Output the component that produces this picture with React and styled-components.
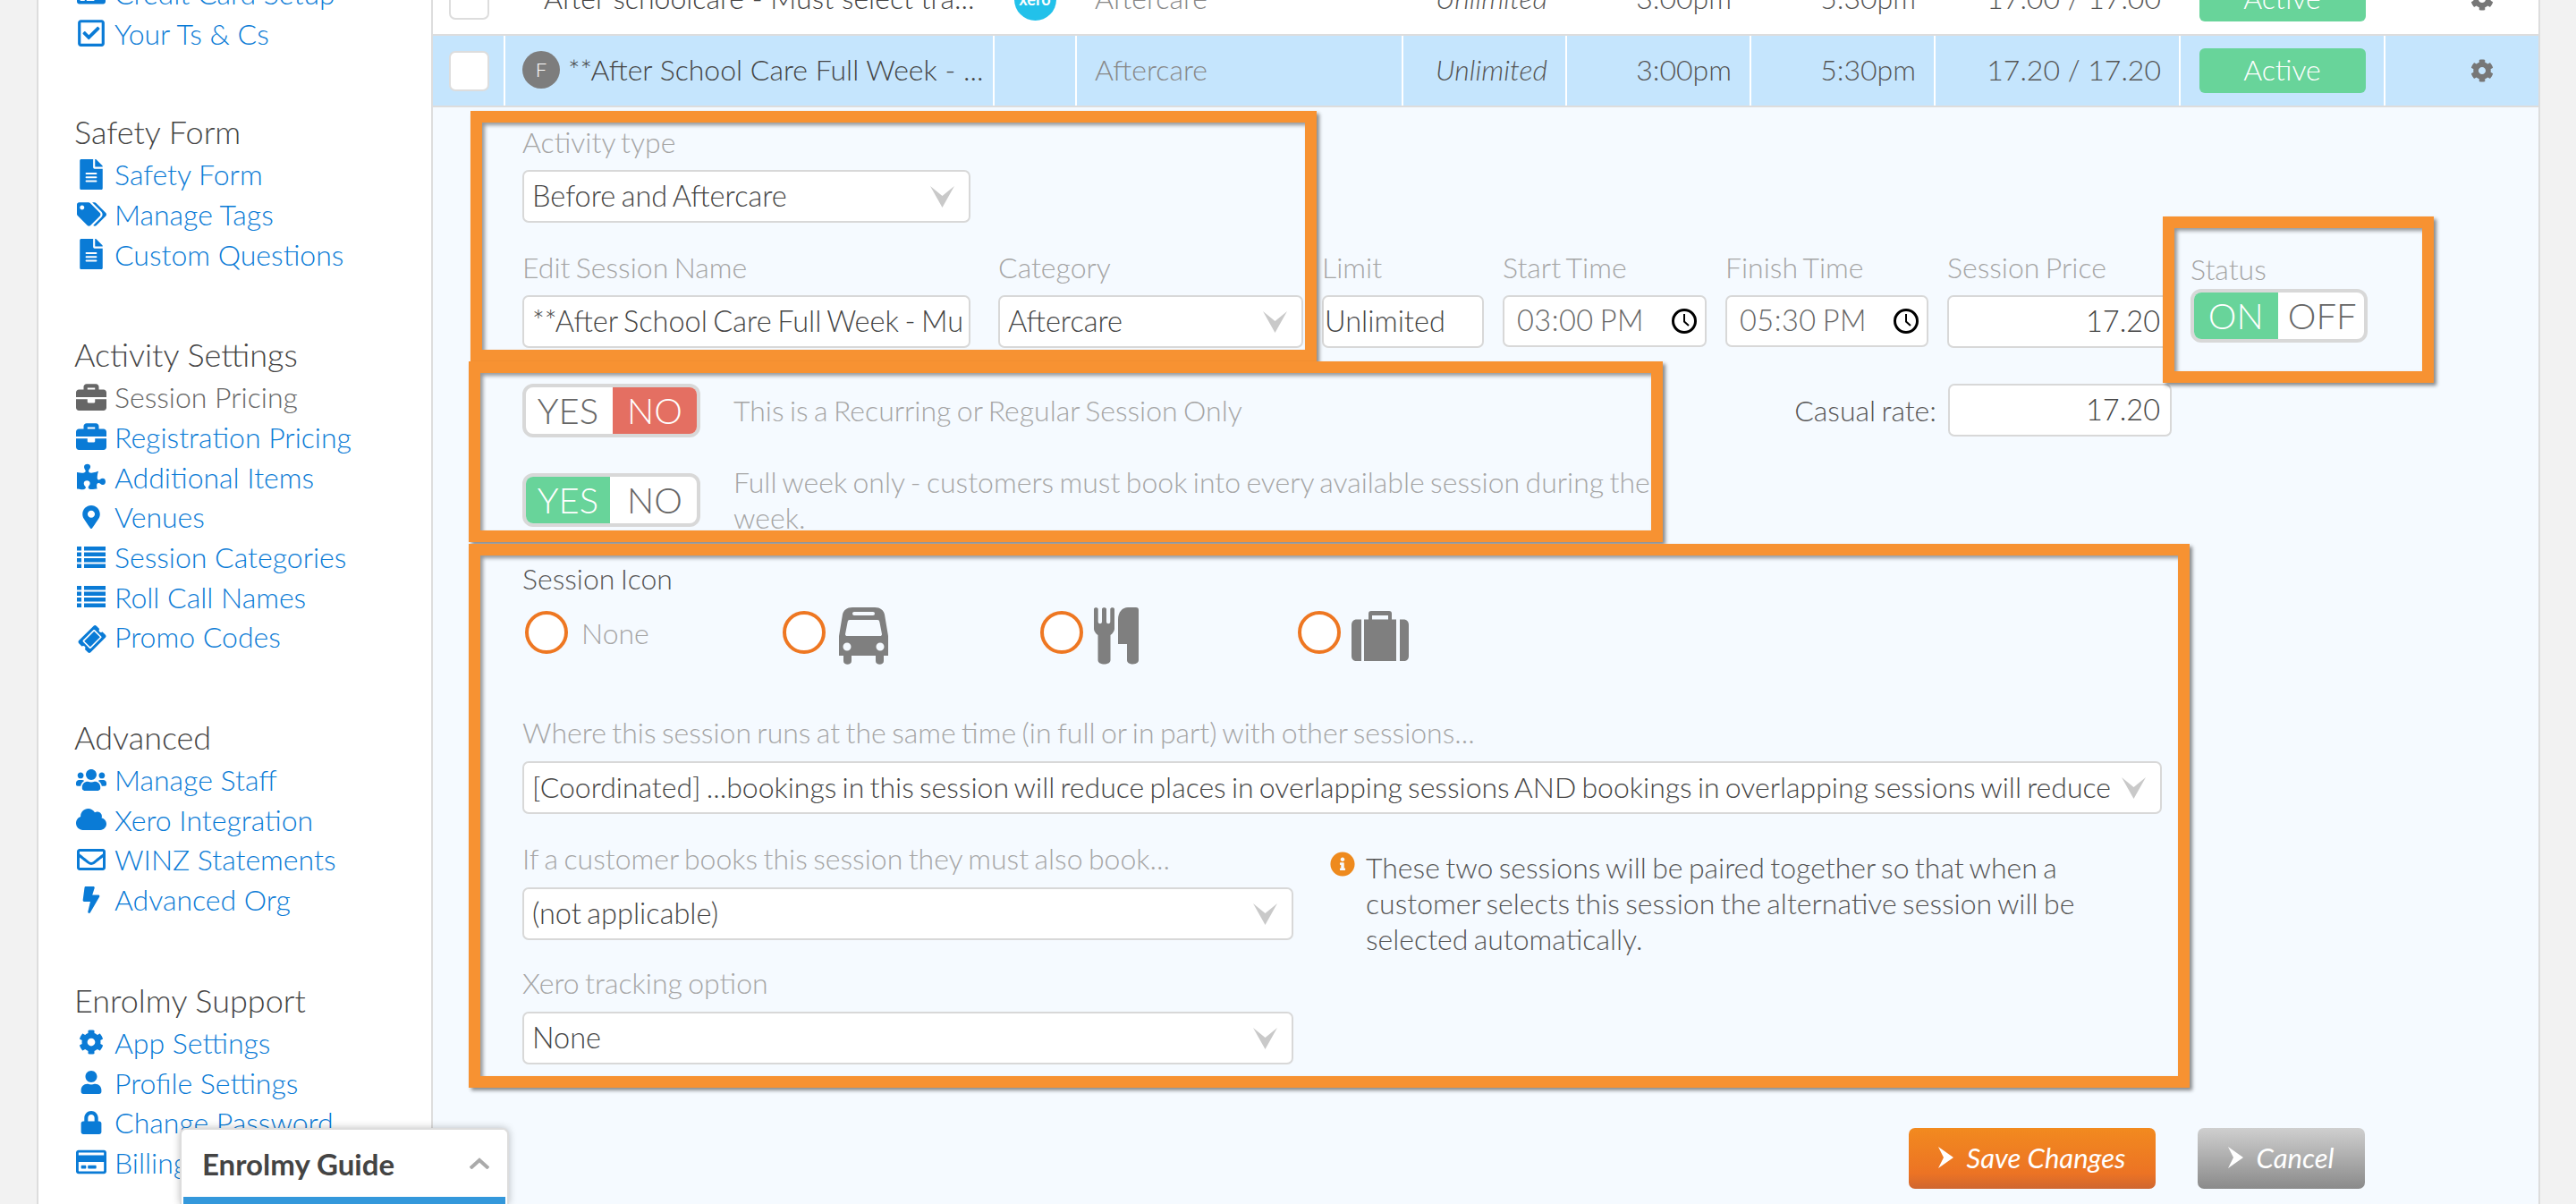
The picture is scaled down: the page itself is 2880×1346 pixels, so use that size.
import React from 'react';
import styled, { createGlobalStyle } from 'styled-components';
import {
  FaBolt, FaBriefcase, FaCloud, FaCog, FaCreditCard, FaFileAlt, FaInfoCircle, FaLock, FaMapMarkerAlt,
  FaPuzzlePiece, FaRegCheckSquare, FaRegCreditCard, FaRegEnvelope, FaTags, FaTicketAlt, FaUser, FaUsers,
} from 'react-icons/fa';

const GlobalStyle = createGlobalStyle`
  html, body {
    margin: 0;
    padding: 0;
    background: #f2f2f2;
    font-family: 'Lato', 'Open Sans', sans-serif;
    font-weight: 300;
  }

  *, *:before, *:after {
    box-sizing: border-box;
  }
`;

const Page = styled.div`
  position: relative;
  display: flex;
  width: 2880px;
  height: 1346px;
  padding-left: 41px;
  overflow: hidden;
  background: #f2f2f2;
`;

const Sidebar = styled.nav`
  flex: 0 0 443px;
  height: 1400px;
  margin-top: -30px;
  padding-left: 40px;
  background: #fff;
  border-left: 2px solid #ddd;
  border-right: 2px solid #ddd;
`;

const NavSection = styled.section`
  margin-bottom: 65px;

  &:first-child {
    margin-bottom: 63px;
  }
`;

const NavHeading = styled.h3`
  margin: 0;
  height: 50px;
  font-size: 36px;
  font-weight: 300;
  line-height: 50px;
  color: #444;
`;

const NavLink = styled.a`
  display: flex;
  align-items: center;
  height: 44.7px;
  font-size: 32px;
  color: ${(p) => (p.$active ? '#666' : '#0a7bd6')};
  white-space: nowrap;
`;

const NavIcon = styled.span`
  display: flex;
  flex: 0 0 45px;
  justify-content: center;
  align-items: center;
  width: 45px;
  padding-right: 7px;
  font-size: ${(p) => p.$size || 32}px;
  transform: ${(p) => p.$turn || 'none'};
`;

const Main = styled.main`
  flex: 0 0 2356px;
  min-width: 0;
  height: 1400px;
  margin-top: -40px;
  background: #f5faff;
  border-right: 2px solid #ddd;
`;

const Row = styled.div`
  display: grid;
  grid-template-columns: 79px 547px 92px 365px 183px 206px 206px 274px 229px 173px;
  height: 80px;
  background: ${(p) => (p.$selected ? '#c5e5fd' : '#fff')};
  border-bottom: 2px solid #ddd;
`;

const Cell = styled.div`
  display: flex;
  align-items: center;
  justify-content: ${(p) => p.$align || 'flex-start'};
  padding: ${(p) => p.$pad || '0 20px 3px'};
  font-size: 32px;
  font-style: ${(p) => (p.$italic ? 'italic' : 'normal')};
  color: ${(p) => p.$color || '#444'};
  white-space: nowrap;
  overflow: hidden;
  border-left: 2px solid ${(p) => (p.$bare ? 'transparent' : '#fff')};
`;

const CheckBox = styled.span`
  display: block;
  width: 45px;
  height: 45px;
  background: #fff;
  border: 2px solid #ddd;
  border-radius: 7px;
`;

const FullBadge = styled.span`
  display: flex;
  flex: 0 0 42px;
  align-items: center;
  justify-content: center;
  width: 42px;
  height: 42px;
  margin-right: 9px;
  border-radius: 50%;
  background: #7d7d7d;
  color: #fff;
  font-size: 22px;
`;

const XeroBadge = styled.span`
  display: flex;
  align-items: center;
  justify-content: center;
  width: 47px;
  height: 47px;
  border-radius: 50%;
  background: #22c1ea;
  color: #fff;
  font-size: 18px;
  font-weight: 700;
`;

const StatusPill = styled.span`
  display: flex;
  align-items: center;
  justify-content: center;
  width: 186px;
  height: 50px;
  padding-bottom: 3px;
  border-radius: 6px;
  background: #68d49a;
  color: #fff;
  font-size: 32px;
`;

const SettingsCog = styled(FaCog)`
  width: 26px;
  height: 26px;
  color: #777;
`;

const Form = styled.form`
  padding: 21px 194px 0 100px;
  word-spacing: -2.3px;
`;

const Label = styled.div`
  height: 40px;
  margin-top: ${(p) => p.$above || 0}px;
  margin-bottom: ${(p) => p.$under ?? 9}px;
  font-size: 32px;
  line-height: 35px;
  color: ${(p) => (p.$dark ? '#555' : '#a5a5a5')};
  white-space: nowrap;
`;

const SelectBox = styled.div`
  display: flex;
  align-items: center;
  justify-content: space-between;
  width: ${(p) => (p.$width ? `${p.$width}px` : '100%')};
  height: 59px;
  padding: 0 16px 3px 9px;
  background: #fff;
  border: 2px solid #d8d8d8;
  border-radius: 7px;
  font-size: 32.5px;
  color: #444;
  white-space: nowrap;
  overflow: hidden;
`;

const SelectText = styled.span`
  overflow: hidden;
`;

const LongText = styled(SelectText)`
  font-size: 32px;
  word-spacing: -2.5px;
`;

const Arrow = styled.svg`
  flex: 0 0 27px;
  width: 27px;
  height: 24px;
  margin: 3px 0 0 10px;
  fill: #c9c9c9;
`;

const Input = styled.div`
  display: flex;
  align-items: center;
  justify-content: ${(p) => (p.$right ? 'flex-end' : 'space-between')};
  height: ${(p) => p.$height || 59}px;
  padding: 0 ${(p) => (p.$right ? 11 : 8)}px 3px ${(p) => p.$left || 8}px;
  background: #fff;
  border: 2px solid #d8d8d8;
  border-radius: 7px;
  font-size: 32.5px;
  color: ${(p) => p.$color || '#444'};
  letter-spacing: ${(p) => p.$spaced || 0}px;
  white-space: nowrap;
  overflow: hidden;
`;

const ClockFace = styled.svg`
  flex: 0 0 30px;
  margin-top: 3px;
  fill: none;
  stroke: #000;
  stroke-width: 3;
`;

const FieldsRow = styled.div`
  display: flex;
  gap: 21px;
  margin-top: 32px;
`;

const Field = styled.div`
  flex: 0 0 ${(p) => p.$width}px;
  width: ${(p) => p.$width}px;
  margin-right: ${(p) => p.$extra || 0}px;
  padding-top: ${(p) => p.$top || 0}px;
`;

const Toggle = styled.div`
  display: flex;
  flex: 0 0 ${(p) => p.$width || 199}px;
  width: ${(p) => p.$width || 199}px;
  height: 60px;
  padding: 4px;
  gap: 3px;
  background: #fff;
  border: 4px solid #d8d8d8;
  border-radius: 12px;
  overflow: hidden;
`;

const ToggleSide = styled.span`
  display: flex;
  flex: 1;
  align-items: center;
  justify-content: center;
  margin: -4px;
  margin-right: ${(p) => (p.$first ? 0 : -4)}px;
  margin-left: ${(p) => (p.$first ? -4 : 0)}px;
  background: ${(p) => p.$fill || 'transparent'};
  color: ${(p) => (p.$fill ? '#fff' : '#666')};
  font-size: 40px;
`;

const SwitchArea = styled.div`
  display: flex;
  align-items: flex-start;
  margin-top: 40px;
`;

const SwitchColumn = styled.div`
  display: flex;
  flex: 0 0 1262px;
  flex-direction: column;
  gap: 30px;
`;

const SwitchRow = styled.div`
  display: flex;
  align-items: center;
  gap: 37px;
`;

const SwitchText = styled.div`
  font-size: 32px;
  line-height: 40px;
  color: #a5a5a5;
`;

const CasualRate = styled.div`
  display: flex;
  align-items: center;
  gap: 13px;
  margin: 0 216px 0 auto;
  font-size: 32px;
  color: #555;
`;

const CasualInput = styled(Input)`
  width: 250px;
`;

const IconChoices = styled.div`
  display: flex;
  margin-bottom: 58px;
`;

const IconChoice = styled.div`
  display: flex;
  flex: 0 0 288px;
  align-items: center;
  gap: ${(p) => p.$gap || 12}px;
  height: 64px;
  padding-left: 3px;
  font-size: 32px;
  color: #a5a5a5;
`;

const Radio = styled.span`
  flex: 0 0 48px;
  width: 48px;
  height: 48px;
  margin-bottom: 8px;
  background: #fff;
  border: 4px solid #ee7722;
  border-radius: 50%;
`;

const NoneText = styled.span`
  margin-bottom: 7px;
`;

const Glyph = styled.svg`
  fill: #7f7f7f;
`;

const PairArea = styled.div`
  display: flex;
  margin-top: 32px;
`;

const PairColumn = styled.div`
  flex: 0 0 862px;
`;

const XeroBlock = styled.div`
  margin-top: 30px;
`;

const Notice = styled.div`
  display: flex;
  gap: 12px;
  width: 900px;
  margin: 8px 0 0 41px;
  font-size: 32px;
  line-height: 40px;
  color: #555;
`;

const NoticeIcon = styled(FaInfoCircle)`
  flex: 0 0 28px;
  width: 28px;
  height: 28px;
  margin-top: 2px;
  color: #ee8a1e;
`;

const Actions = styled.div`
  display: flex;
  justify-content: flex-end;
  gap: 47px;
  margin-top: 71px;
`;

const ActionButton = styled.button`
  display: flex;
  align-items: center;
  justify-content: center;
  gap: 14px;
  width: ${(p) => p.$width}px;
  height: 68px;
  padding: 0 0 3px;
  border: 0;
  border-radius: 7px;
  background: ${(p) => p.$bg};
  color: #fff;
  font-family: inherit;
  font-size: 31px;
  font-style: italic;
  font-weight: 400;
`;

const Frame = styled.div`
  position: absolute;
  left: ${(p) => p.$x}px;
  top: ${(p) => p.$y}px;
  width: ${(p) => p.$w}px;
  height: ${(p) => p.$h}px;
  border: 13px solid #f79232;
  box-shadow: 3px 3px 4px rgba(0, 0, 0, 0.45), inset 3px 3px 4px rgba(0, 0, 0, 0.4);
  pointer-events: none;
`;

const GuideTab = styled.div`
  position: absolute;
  left: 201px;
  top: 1261px;
  display: flex;
  align-items: center;
  justify-content: space-between;
  width: 368px;
  height: 85px;
  padding: 0 20px 8px 23px;
  background: #fff;
  border: 2px solid #ddd;
  border-bottom: 0;
  border-radius: 7px 7px 0 0;
  box-shadow: 0 0 8px rgba(0, 0, 0, 0.25);
  font-size: 33px;
  font-weight: 700;
  color: #444;
`;

const GuideBar = styled.span`
  position: absolute;
  left: 2px;
  right: 2px;
  bottom: 0;
  height: 8px;
  background: #3498db;
`;

const Caret = () => (
  <Arrow viewBox="0 0 27 24"><path d="M0 0 L13.5 11 L27 0 L13.5 24 Z" /></Arrow>
);

const Clock = () => (
  <ClockFace width="30" height="30" viewBox="0 0 30 30">
    <circle cx="15" cy="15" r="12.5" />
    <path d="M15 7 V15.5 L20 20" strokeWidth="2" />
  </ClockFace>
);

const Chevron = () => (
  <svg width="17" height="24" viewBox="0 0 17 24" fill="#fff"><path d="M0 0 L17 12 L0 24 L6 12 Z" /></svg>
);

const ListGlyph = () => (
  <svg width="32" height="24" viewBox="0 0 32 24" fill="currentColor">
    <path d="M0 0 H5 V4.5 H0 Z M8 0 H32 V4.5 H8 Z M0 6.5 H5 V11 H0 Z M8 6.5 H32 V11 H8 Z M0 13 H5 V17.5 H0 Z M8 13 H32 V17.5 H8 Z M0 19.5 H5 V24 H0 Z M8 19.5 H32 V24 H8 Z" />
  </svg>
);

const Bus = () => (
  <Glyph width="55" height="64" viewBox="0 0 55 64">
    <path fillRule="evenodd" d="M15 0 H40 C46 0 50 3 51 8 L55 32 V54 H50 V60 C50 65 41 65 41 60 V54 H14 V60 C14 65 5 65 5 60 V54 H0 V32 L4 8 C5 3 9 0 15 0 Z M17 5 A2 2 0 0 0 17 9 H38 A2 2 0 0 0 38 5 Z M12 14 C10 14 10 15 9.5 17 L7 30 C7 31.5 8 32 9 32 H46 C47 32 48 31.5 48 30 L45.5 17 C45 15 45 14 43 14 Z M9 39.5 A4.5 4.5 0 1 0 9 48.5 A4.5 4.5 0 1 0 9 39.5 Z M46 39.5 A4.5 4.5 0 1 0 46 48.5 A4.5 4.5 0 1 0 46 39.5 Z" />
  </Glyph>
);

const Cutlery = () => (
  <Glyph width="50" height="64" viewBox="0 0 50 64">
    <path d="M0 2 C0 -0.5 4.7 -0.5 4.7 2 V16 C4.7 19 9 19 9 16 V2 C9 -0.5 14 -0.5 14 2 V16 C14 19 18.3 19 18.3 16 V2 C18.3 -0.5 23 -0.5 23 2 V24 C23 27 20 30 18.5 31 V59 C18.5 65 4.5 65 4.5 59 V31 C3 30 0 27 0 24 Z" />
    <path d="M27 14 C27 5 32 0 38 0 H47 C49 0 50 1 50 3 V59 C50 65 37 65 37 59 V41 H27 Z" />
  </Glyph>
);

const Suitcase = () => (
  <Glyph width="64" height="56" viewBox="0 0 64 56">
    <path fillRule="evenodd" d="M19 9.5 V3 C19 1 20 0 22 0 H42 C44 0 45 1 45 3 V9.5 H50 V56 H14 V9.5 Z M23 5 V9.5 H41 V5 Z" />
    <path d="M11 9.5 V56 H6 C2 56 0 54 0 50 V16 C0 12 2 9.5 6 9.5 Z M54 9.5 H58 C62 9.5 64 12 64 16 V50 C64 54 62 56 58 56 H54 Z" />
  </Glyph>
);

const navGroups = [
  { links: [['Credit Card Setup', FaCreditCard], ['Your Ts & Cs', FaRegCheckSquare, { size: 34 }]] },
  { title: 'Safety Form', links: [['Safety Form', FaFileAlt, { size: 34 }], ['Manage Tags', FaTags, { size: 33 }], ['Custom Questions', FaFileAlt, { size: 34 }]] },
  {
    title: 'Activity Settings',
    links: [
      ['Session Pricing', FaBriefcase, { active: true, size: 34 }], ['Registration Pricing', FaBriefcase, { size: 34 }],
      ['Additional Items', FaPuzzlePiece], ['Venues', FaMapMarkerAlt, { size: 26 }],
      ['Session Categories', ListGlyph], ['Roll Call Names', ListGlyph],
      ['Promo Codes', FaTicketAlt, { turn: 'rotate(-45deg)', size: 28 }],
    ],
  },
  {
    title: 'Advanced',
    links: [['Manage Staff', FaUsers, { size: 34 }], ['Xero Integration', FaCloud, { size: 34 }], ['WINZ Statements', FaRegEnvelope], ['Advanced Org', FaBolt, { size: 30 }]],
  },
  {
    title: 'Enrolmy Support',
    links: [['App Settings', FaCog, { size: 28 }], ['Profile Settings', FaUser, { size: 26 }], ['Change Password', FaLock, { size: 26 }], ['Billing', FaRegCreditCard, { size: 34 }]],
  },
];

const SessionRow = ({ selected, name, badge, price, namePad }) => (
  <Row $selected={selected}>
    <Cell $bare $pad="0 0 0 16px"><CheckBox /></Cell>
    <Cell $bare={!selected} $pad={namePad}>
      {badge}
      <SelectText>{name}</SelectText>
    </Cell>
    <Cell $bare={!selected} $align="center" $pad="0">{!selected && <XeroBadge>xero</XeroBadge>}</Cell>
    <Cell $bare={!selected} $color="#888">Aftercare</Cell>
    <Cell $bare={!selected} $align="flex-end" $italic $color="#555">Unlimited</Cell>
    <Cell $bare={!selected} $align="flex-end" $color="#555">3:00pm</Cell>
    <Cell $bare={!selected} $align="flex-end" $color="#555">5:30pm</Cell>
    <Cell $bare={!selected} $align="flex-end" $color="#555">{price}</Cell>
    <Cell $bare={!selected} $align="center" $pad="0"><StatusPill>Active</StatusPill></Cell>
    <Cell $bare={!selected} $align="flex-end" $pad="0 50px 0 0"><SettingsCog /></Cell>
  </Row>
);

const App = () => (
  <Page>
    <GlobalStyle />
    <Sidebar>
      {navGroups.map((group, i) => (
        <NavSection key={i}>
          {group.title && <NavHeading>{group.title}</NavHeading>}
          {group.links.map(([label, Icon, opts = {}]) => (
            <NavLink key={label} $active={opts.active}>
              <NavIcon $size={opts.size} $turn={opts.turn}><Icon /></NavIcon>
              {label}
            </NavLink>
          ))}
        </NavSection>
      ))}
    </Sidebar>

    <Main>
      <SessionRow name="After schoolcare - Must select tra..." price="17.00 / 17.00" namePad="0 0 3px 43px" />
      <SessionRow selected badge={<FullBadge>F</FullBadge>} name="**After School Care Full Week - ..." price="17.20 / 17.20" namePad="0 0 3px 19px" />

      <Form>
        <Label>Activity type</Label>
        <SelectBox $width={501}>Before and Aftercare<Caret /></SelectBox>

        <FieldsRow>
          <Field $width={501} $extra={10}>
            <Label>Edit Session Name</Label>
            <Input $left={9}>**After School Care Full Week - Mu</Input>
          </Field>
          <Field $width={341}>
            <Label>Category</Label>
            <SelectBox>Aftercare<Caret /></SelectBox>
          </Field>
          <Field $width={181}>
            <Label>Limit</Label>
            <Input $left={1}>Unlimited</Input>
          </Field>
          <Field $width={228}>
            <Label>Start Time</Label>
            <Input $left={14} $spaced={0.5} $height={58} $color="#666">03:00 PM<Clock /></Input>
          </Field>
          <Field $width={227}>
            <Label>Finish Time</Label>
            <Input $left={14} $spaced={0.5} $height={58} $color="#666">05:30 PM<Clock /></Input>
          </Field>
          <Field $width={251}>
            <Label>Session Price</Label>
            <Input $right>17.20</Input>
          </Field>
          <Field $width={198} $top={2}>
            <Label $under={0}>Status</Label>
            <Toggle $width={198}>
              <ToggleSide $first $fill="#68d49a">ON</ToggleSide>
              <ToggleSide>OFF</ToggleSide>
            </Toggle>
          </Field>
        </FieldsRow>

        <SwitchArea>
          <SwitchColumn>
            <SwitchRow>
              <Toggle>
                <ToggleSide $first>YES</ToggleSide>
                <ToggleSide $fill="#e46f62">NO</ToggleSide>
              </Toggle>
              <SwitchText>This is a Recurring or Regular Session Only</SwitchText>
            </SwitchRow>
            <SwitchRow>
              <Toggle>
                <ToggleSide $first $fill="#68d49a">YES</ToggleSide>
                <ToggleSide>NO</ToggleSide>
              </Toggle>
              <SwitchText>Full week only - customers must book into every available session during the week.</SwitchText>
            </SwitchRow>
          </SwitchColumn>
          <CasualRate>
            Casual rate:
            <CasualInput $right>17.20</CasualInput>
          </CasualRate>
        </SwitchArea>

        <Label $dark $above={30} $under={10}>Session Icon</Label>
        <IconChoices>
          <IconChoice $gap={15}><Radio /><NoneText>None</NoneText></IconChoice>
          <IconChoice $gap={15}><Radio /><Bus /></IconChoice>
          <IconChoice><Radio /><Cutlery /></IconChoice>
          <IconChoice><Radio /><Suitcase /></IconChoice>
        </IconChoices>

        <Label $under={10}>Where this session runs at the same time (in full or in part) with other sessions...</Label>
        <SelectBox $width={1833}>
          <LongText>[Coordinated] ...bookings in this session will reduce places in overlapping sessions AND bookings in overlapping sessions will reduce</LongText>
          <Caret />
        </SelectBox>

        <PairArea>
          <PairColumn>
            <Label $under={10}>If a customer books this session they must also book...</Label>
            <SelectBox>(not applicable)<Caret /></SelectBox>
            <XeroBlock>
              <Label $under={10}>Xero tracking option</Label>
              <SelectBox>None<Caret /></SelectBox>
            </XeroBlock>
          </PairColumn>
          <Notice>
            <NoticeIcon />
            <span>These two sessions will be paired together so that when a customer selects this session the alternative session will be selected automatically.</span>
          </Notice>
        </PairArea>

        <Actions>
          <ActionButton $width={276} $bg="linear-gradient(to bottom, #f28a1f 0%, #ec7324 75%, #cf6630 100%)">
            <Chevron />
            Save Changes
          </ActionButton>
          <ActionButton $width={187} $bg="linear-gradient(to bottom, #cfcfcf 0%, #8a8a8a 100%)">
            <Chevron />
            Cancel
          </ActionButton>
        </Actions>
      </Form>
    </Main>

    <Frame $x={526} $y={124} $w={946} $h={280} />
    <Frame $x={524} $y={404} $w={1335} $h={202} />
    <Frame $x={524} $y={608} $w={1924} $h={608} />
    <Frame $x={2418} $y={242} $w={303} $h={186} />

    <GuideTab>
      Enrolmy Guide
      <svg width="22" height="13" viewBox="0 0 22 13" fill="none" stroke="#aaa" strokeWidth="4"><path d="M1 12 L11 3 L21 12" /></svg>
      <GuideBar />
    </GuideTab>
  </Page>
);

export default App;
